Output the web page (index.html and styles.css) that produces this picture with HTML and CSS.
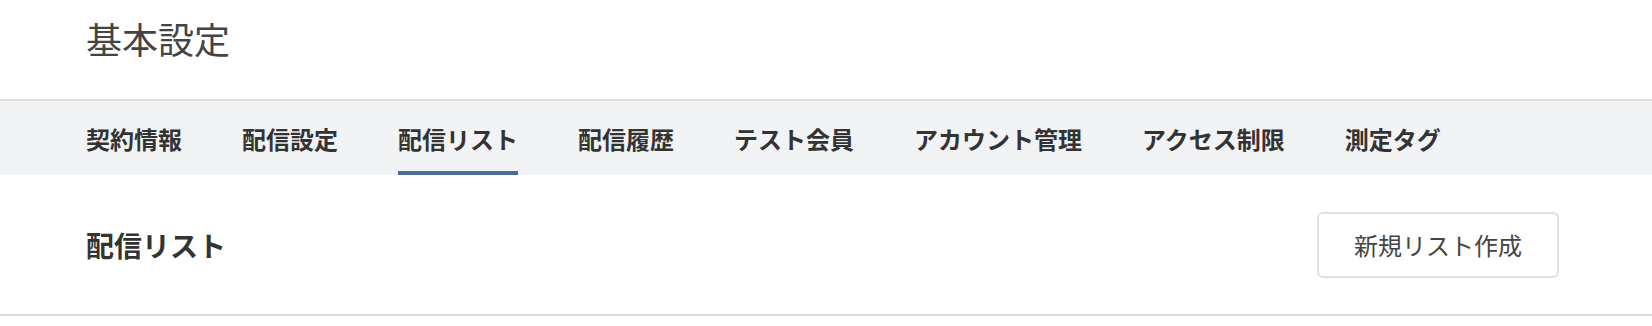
FILE: index.html
```html
<!DOCTYPE html>
<html>
<head>
    <title>基本設定</title>
    <link rel="stylesheet" href="styles.css">
</head>
<body>
    <header class="page-header">
        <h1>基本設定</h1>
    </header>

    <nav class="tabs">
        <a class="tab" href="#">契約情報</a>
        <a class="tab" href="#">配信設定</a>
        <a class="tab active" href="#">配信リスト</a>
        <a class="tab" href="#">配信履歴</a>
        <a class="tab" href="#">テスト会員</a>
        <a class="tab" href="#">アカウント管理</a>
        <a class="tab" href="#">アクセス制限</a>
        <a class="tab" href="#">測定タグ</a>
    </nav>

    <section class="section-head">
        <h2>配信リスト</h2>
        <button type="button" class="btn">新規リスト作成</button>
    </section>
</body>
</html>
```

FILE: styles.css
```css
body {
    font-family: "Noto Sans CJK JP", "Noto Sans", sans-serif;
    margin: 0;
    background-color: #fff;
    color: #333;
}
.page-header {
    height: 99px;
    padding: 0 93px 0 86px;
    box-sizing: border-box;
}
.page-header h1 {
    margin: 0;
    padding-top: 20px;
    font-size: 36px;
    line-height: 36px;
    font-weight: normal;
    color: #444;
}
.tabs {
    display: flex;
    gap: 60px;
    padding: 0 93px 0 86px;
    border-top: 2px solid #dedfe1;
    background-color: #f2f3f5;
}
.tab {
    display: block;
    padding: 26px 0 20px;
    border-bottom: 4px solid transparent;
    font-size: 24px;
    line-height: 24px;
    font-weight: bold;
    color: #333;
    text-decoration: none;
}
.tab.active {
    border-bottom-color: #4a6c9a;
}
.section-head {
    display: flex;
    justify-content: space-between;
    align-items: center;
    height: 139px;
    padding: 0 93px 0 86px;
    border-bottom: 2px solid #dedede;
}
.section-head h2 {
    margin: 0;
    font-size: 28px;
    line-height: 28px;
    font-weight: bold;
    color: #333;
}
.btn {
    width: 242px;
    height: 66px;
    padding: 0;
    border: 2px solid #e0e0e0;
    border-radius: 6px;
    background-color: #fff;
    font-family: inherit;
    font-size: 24px;
    color: #444;
    cursor: pointer;
}
```
